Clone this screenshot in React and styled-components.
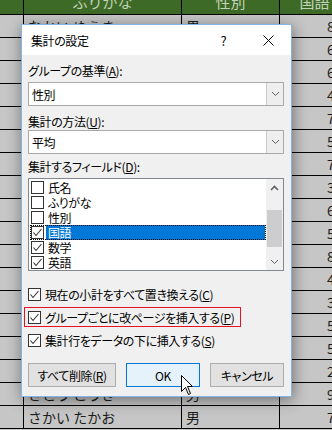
import React from 'react';
import styled, { createGlobalStyle } from 'styled-components';

const GlobalStyle = createGlobalStyle`
  html, body {
    margin: 0;
    padding: 0;
  }
  body {
    width: 332px;
    height: 430px;
    overflow: hidden;
    background: #c6c6c6;
    font-family: "Noto Sans CJK JP", "Noto Sans", sans-serif;
  }
`;

const Screen = styled.div`
  position: relative;
  width: 332px;
  height: 430px;
  overflow: hidden;
`;

const Sheet = styled.div`
  display: grid;
  grid-template-columns: 24px 158px 98px 70px;
  grid-template-rows: 15px;
  grid-auto-rows: 23px;
`;

const Cell = styled.div`
  box-sizing: border-box;
  border-right: 1px solid #000;
  border-bottom: 1px solid #000;
  background: #c6c6c6;
  color: #1c1c1c;
  font-size: 14px;
  display: flex;
  align-items: center;
  padding-left: ${p => p.$pad || 4}px;
  white-space: nowrap;
  overflow: hidden;
`;

const HeadCell = styled.div`
  box-sizing: border-box;
  border-right: 1px solid #000;
  border-bottom: 1px solid #000;
  background: #3e6a27;
  color: #c3d2b6;
  font-size: 15px;
  line-height: 15px;
  display: flex;
  align-items: flex-end;
  justify-content: center;
  overflow: hidden;

  span {
    margin-bottom: 5px;
  }
`;

const Dialog = styled.div`
  position: absolute;
  left: 21px;
  top: 24px;
  width: 271px;
  height: 373px;
  box-sizing: border-box;
  border: 1px solid #82b5e6;
  background: #f0f0f0;
  box-shadow: 1px 3px 14px rgba(0, 0, 0, 0.45);
  display: flex;
  flex-direction: column;
  font-size: 12px;
  letter-spacing: -0.4px;
  font-feature-settings: "palt";
  color: #000;
`;

const TitleBar = styled.div`
  height: 30px;
  background: #fff;
  display: flex;
  align-items: center;
  padding-left: 9px;
`;

const Title = styled.div`
  flex: 1;
`;

const TitleButton = styled.div`
  width: 45px;
  height: 30px;
  display: flex;
  align-items: center;
  justify-content: center;
  font-size: 13px;
`;

const Body = styled.div`
  display: flex;
  flex-direction: column;
  padding: 0 7px 0 6px;
`;

const Label = styled.div`
  line-height: 16px;
  margin-top: ${p => p.$top}px;
  margin-bottom: ${p => p.$bottom}px;
`;

const Combo = styled.div`
  height: 24px;
  box-sizing: border-box;
  border: 1px solid #a9a9a9;
  background: #fff;
  display: flex;
`;

const ComboText = styled.div`
  flex: 1;
  display: flex;
  align-items: center;
  padding-left: 3px;
`;

const ComboButton = styled.div`
  width: 16px;
  border-left: 1px solid #c9c9c9;
  background: #eeeeee;
  display: flex;
  align-items: center;
  justify-content: center;
`;

const ListBox = styled.div`
  height: 93px;
  box-sizing: border-box;
  border: 1px solid #828790;
  background: #fff;
  display: flex;
`;

const Items = styled.div`
  flex: 1;
  padding-top: 1px;
  display: flex;
  flex-direction: column;
`;

const Item = styled.div`
  height: 15px;
  display: flex;
  align-items: center;
  margin-left: 1px;
  outline: ${p => (p.$focus ? '1px dotted #000' : 'none')};
  outline-offset: -1px;
`;

const ItemText = styled.div`
  flex: 1;
  align-self: stretch;
  display: flex;
  align-items: center;
  margin-left: 2px;
  margin-right: 1px;
  padding-left: 2px;
  background: ${p => (p.$selected ? '#0078d7' : 'transparent')};
  color: ${p => (p.$selected ? '#fff' : '#000')};
`;

const ScrollBar = styled.div`
  width: 17px;
  background: #f0f0f0;
  display: flex;
  flex-direction: column;
`;

const ScrollArrow = styled.div`
  height: 17px;
  display: flex;
  align-items: center;
  justify-content: center;
`;

const ScrollTrack = styled.div`
  flex: 1;
`;

const Thumb = styled.div`
  width: 15px;
  height: 37px;
  margin: 14px 0 0 1px;
  background: #cdcdcd;
`;

const Box = styled.div`
  width: 13px;
  height: 13px;
  box-sizing: border-box;
  border: 1px solid #333;
  background: #fff;
  display: flex;
  align-items: center;
  justify-content: center;
  flex: none;
  margin-left: ${p => p.$left || 0}px;
`;

const Options = styled.div`
  display: flex;
  flex-direction: column;
  align-items: flex-start;
  gap: 3px;
  margin-top: 13px;
`;

const CheckRow = styled.div`
  display: inline-flex;
  align-items: center;
  gap: 4px;
  height: 20px;
  box-sizing: border-box;
  border: 1px solid ${p => (p.$marked ? '#e81123' : 'transparent')};
  padding: 0 6px 0 3px;
  margin-left: -4px;
`;

const Buttons = styled.div`
  display: flex;
  gap: 10px;
  margin-top: 13px;
`;

const Button = styled.div`
  width: ${p => p.$w}px;
  height: 24px;
  box-sizing: border-box;
  border: 1px solid ${p => (p.$primary ? '#0078d7' : '#adadad')};
  background: ${p => (p.$primary ? '#e5f1fb' : '#e1e1e1')};
  display: flex;
  align-items: center;
  justify-content: center;
`;

const Cursor = styled.svg`
  position: absolute;
  left: 181px;
  top: 375px;
`;

const rows = [
  ['なかい ゆうき', '男', '85'],
  ['いしだ まい', '女', '62'],
  ['うえの けん', '男', '68'],
  ['おかだ さき', '女', '45'],
  ['かとう りょう', '男', '72'],
  ['きむら あい', '女', '58'],
  ['くどう しん', '男', '70'],
  ['こばやし ゆか', '女', '35'],
  ['さいとう まこと', '男', '66'],
  ['しみず なな', '女', '54'],
  ['すずき たくや', '男', '81'],
  ['せき みほ', '女', '47'],
  ['たなか ひろし', '男', '39'],
  ['ちば ゆり', '女', '56'],
  ['つじ かおる', '女', '52'],
  ['ながい れな', '女', '28'],
  ['さとう こうき', '男', '91'],
  ['さかい たかお', '男', '74'],
];

const Check = () => (
  <svg width="11" height="11" viewBox="0 0 11 11">
    <polyline points="1.5,5.5 4,8.5 9.5,2" fill="none" stroke="#333" strokeWidth="1.1" />
  </svg>
);

const CheckBox = ({ checked, left }) => <Box $left={left}>{checked && <Check />}</Box>;

const Chevron = ({ up }) => (
  <svg width="9" height="6" viewBox="0 0 9 6">
    <polyline
      points={up ? '1,5 4.5,1.5 8,5' : '1,1 4.5,4.5 8,1'}
      fill="none"
      stroke="#606060"
      strokeWidth={up ? 1.6 : 1}
    />
  </svg>
);

const fields = [
  ['氏名', false],
  ['ふりがな', false],
  ['性別', false],
  ['国語', true],
  ['数学', true],
  ['英語', true],
];

export default function App() {
  return (
    <Screen>
      <GlobalStyle />
      <Sheet>
        <HeadCell />
        <HeadCell><span>ふりがな</span></HeadCell>
        <HeadCell><span>性別</span></HeadCell>
        <HeadCell><span>国語</span></HeadCell>
        {rows.map(([name, sex, score]) => (
          <React.Fragment key={name}>
            <Cell />
            <Cell>{name}</Cell>
            <Cell>{sex}</Cell>
            <Cell $pad={47}>{score}</Cell>
          </React.Fragment>
        ))}
      </Sheet>

      <Dialog>
        <TitleBar>
          <Title>集計の設定</Title>
          <TitleButton>?</TitleButton>
          <TitleButton>
            <svg width="11" height="11" viewBox="0 0 11 11">
              <path d="M0.5 0.5 L10.5 10.5 M10.5 0.5 L0.5 10.5" stroke="#000" strokeWidth="1" />
            </svg>
          </TitleButton>
        </TitleBar>
        <Body>
          <Label $top={8} $bottom={3}>グループの基準(<u>A</u>):</Label>
          <Combo>
            <ComboText>性別</ComboText>
            <ComboButton><Chevron /></ComboButton>
          </Combo>
          <Label $top={8} $bottom={0}>集計の方法(<u>U</u>):</Label>
          <Combo>
            <ComboText>平均</ComboText>
            <ComboButton><Chevron /></ComboButton>
          </Combo>
          <Label $top={5} $bottom={3}>集計するフィールド(<u>D</u>):</Label>
          <ListBox>
            <Items>
              {fields.map(([name, checked]) => (
                <Item key={name} $focus={name === '国語'}>
                  <CheckBox checked={checked} left={1} />
                  <ItemText $selected={name === '国語'}>{name}</ItemText>
                </Item>
              ))}
            </Items>
            <ScrollBar>
              <ScrollArrow><Chevron up /></ScrollArrow>
              <ScrollTrack><Thumb /></ScrollTrack>
              <ScrollArrow><Chevron /></ScrollArrow>
            </ScrollBar>
          </ListBox>
          <Options>
            <CheckRow>
              <CheckBox checked />
              <span>現在の小計をすべて置き換える(<u>C</u>)</span>
            </CheckRow>
            <CheckRow $marked>
              <CheckBox checked />
              <span>グループごとに改ページを挿入する(<u>P</u>)</span>
            </CheckRow>
            <CheckRow>
              <CheckBox checked />
              <span>集計行をデータの下に挿入する(<u>S</u>)</span>
            </CheckRow>
          </Options>
          <Buttons>
            <Button $w={88}><span>すべて削除(<u>R</u>)</span></Button>
            <Button $w={74} $primary>OK</Button>
            <Button $w={74}>キャンセル</Button>
          </Buttons>
        </Body>
      </Dialog>

      <Cursor width="13" height="21" viewBox="0 0 13 21">
        <path
          d="M0.5 0.5 L0.5 16.5 L4.5 12.5 L7.5 19.5 L9.5 18.5 L6.5 11.5 L11.5 11.5 Z"
          fill="#fff"
          stroke="#000"
          strokeWidth="1"
          strokeLinejoin="round"
        />
      </Cursor>
    </Screen>
  );
}
